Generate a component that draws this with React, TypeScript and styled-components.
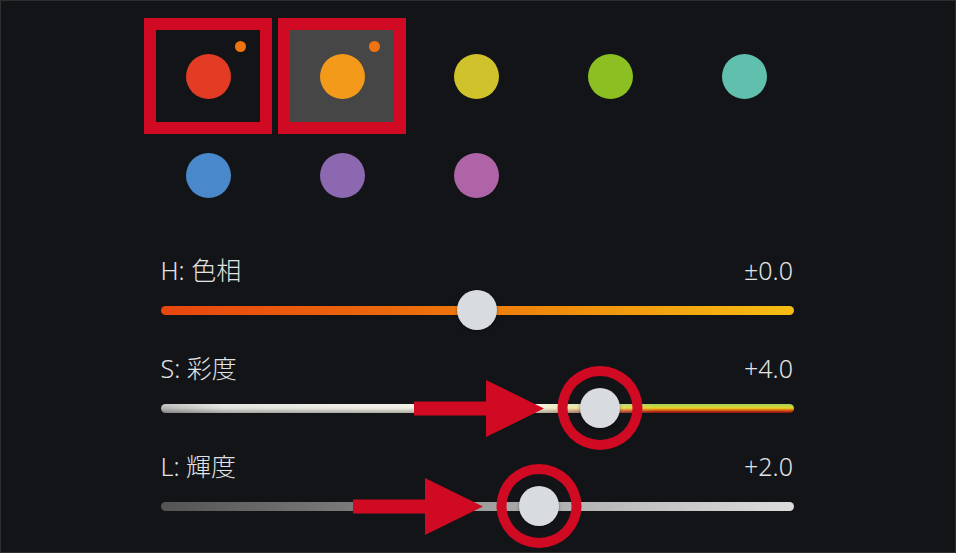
import React from 'react';
import styled, { createGlobalStyle } from 'styled-components';

const GlobalStyle = createGlobalStyle`
    html, body {
        margin: 0;
        padding: 0;
        background: #131417;
    }
    * {
        box-sizing: border-box;
    }
`;

const RED = '#cf0a22';

const Frame = styled.div`
    width: 956px;
    height: 553px;
    background-color: #131417;
    border: 1px solid #2e2f31;
    display: flex;
    flex-direction: column;
    align-items: center;
    padding-top: 29px;
    overflow: hidden;
    font-family: "Noto Sans", "Noto Sans CJK JP", sans-serif;
`;

const Panel = styled.div`
    width: 640px;
    margin-left: -4px;
`;

const SwatchGrid = styled.div`
    display: grid;
    grid-template-columns: repeat(5, 104px);
    grid-auto-rows: 92px;
    column-gap: 30px;
    row-gap: 7px;
`;

const Swatch = styled.div<{ $active?: boolean; $marked?: boolean }>`
    position: relative;
    display: flex;
    align-items: center;
    justify-content: center;
    background-color: ${(p) => (p.$active ? '#464646' : 'transparent')};
    outline: ${(p) => (p.$marked ? `12px solid ${RED}` : 'none')};
`;

const Dot = styled.div<{ $color: string }>`
    width: 45px;
    height: 45px;
    border-radius: 50%;
    background-color: ${(p) => p.$color};
`;

const Badge = styled.div`
    position: absolute;
    top: 11px;
    right: 14px;
    width: 11px;
    height: 11px;
    border-radius: 50%;
    background-color: #ef7410;
`;

const Sliders = styled.div`
    margin-top: 34px;
    display: flex;
    flex-direction: column;
    gap: 23px;
    padding: 0 2px 0 4.5px;
`;

const SliderBlock = styled.div`
    display: flex;
    flex-direction: column;
`;

const LabelRow = styled.div`
    display: flex;
    justify-content: space-between;
    align-items: center;
    height: 30px;
    font-size: 25px;
    font-weight: 300;
    line-height: 30px;
    color: #e2e3e5;
    padding: 0 1px 0 0;
`;

const TrackArea = styled.div`
    position: relative;
    height: 40px;
    margin-top: 5px;
    display: flex;
    align-items: center;
`;

const Track = styled.div<{ $bg: string }>`
    flex: 1;
    height: 9px;
    border-radius: 5px;
    background: ${(p) => p.$bg};
`;

const ThumbSpot = styled.div`
    position: absolute;
    top: 50%;
    width: 40px;
    height: 40px;
    transform: translate(-50%, -50%);
`;

const Thumb = styled.div`
    width: 40px;
    height: 40px;
    border-radius: 50%;
    background-color: #d8dbdf;
    box-shadow: 0 1px 3px rgba(0, 0, 0, 0.45);
`;

const Ring = styled.div`
    position: absolute;
    left: 50%;
    top: 50%;
    width: 85px;
    height: 84px;
    transform: translate(-50%, -50%);
    border: 10px solid ${RED};
    border-radius: 50%;
`;

const Arrow = styled.svg`
    position: absolute;
    left: -166px;
    top: -8px;
`;

const SHADE = 'linear-gradient(to bottom, rgba(255,255,255,0.25) 0%, rgba(255,255,255,0) 45%, rgba(0,0,0,0.28) 100%)';
const HUE = 'linear-gradient(to right, #e8460f 0%, #ec6c0c 40%, #f08f0c 65%, #f6be14 100%)';
const SAT =
    SHADE + ', ' +
    'linear-gradient(to right, #b4b4b4 0%, #e0e0dc 10%, #eeeee4 35%, #f2eed6 60%, rgba(242,238,214,0) 78%), ' +
    'linear-gradient(to bottom, #8cc42a 0%, #b9d02a 25%, #f2d21e 45%, #ee8a14 65%, #e2401a 82%, #b81410 100%)';
const LUM = 'linear-gradient(to right, #545454 0%, #7a7a7a 30%, #aeaeae 60%, #dcdcdc 100%)';

interface SliderProps {
    label: string;
    value: string;
    pct: number;
    bg: string;
    marked?: boolean;
}

const Slider: React.FC<SliderProps> = ({ label, value, pct, bg, marked }) => (
    <SliderBlock>
        <LabelRow>
            <span>{label}</span>
            <span>{value}</span>
        </LabelRow>
        <TrackArea>
            <Track $bg={bg} />
            <ThumbSpot style={{ left: `${pct}%` }}>
                <Thumb />
                {marked && (
                    <>
                        <Ring />
                        <Arrow width="130" height="57" viewBox="0 0 130 57">
                            <polygon points="0,21.5 72,21.5 72,0 130,28.5 72,57 72,35.5 0,35.5" fill={RED} />
                        </Arrow>
                    </>
                )}
            </ThumbSpot>
        </TrackArea>
    </SliderBlock>
);

const swatches = [
    { color: '#e33b24', marked: true, badge: true },
    { color: '#f39a1b', marked: true, active: true, badge: true },
    { color: '#cfc22a' },
    { color: '#8bbf22' },
    { color: '#60c0ad' },
    { color: '#4a88cc' },
    { color: '#8c68b0' },
    { color: '#b064a8' },
];

const App: React.FC = () => {
    return (
        <>
            <GlobalStyle />
            <Frame>
                <Panel>
                    <SwatchGrid>
                        {swatches.map((s, i) => (
                            <Swatch key={i} $active={s.active} $marked={s.marked}>
                                <Dot $color={s.color} />
                                {s.badge && <Badge />}
                            </Swatch>
                        ))}
                    </SwatchGrid>
                    <Sliders>
                        <Slider label="H: 色相" value="±0.0" pct={50} bg={HUE} />
                        <Slider label="S: 彩度" value="+4.0" pct={69.4} bg={SAT} marked />
                        <Slider label="L: 輝度" value="+2.0" pct={59.7} bg={LUM} marked />
                    </Sliders>
                </Panel>
            </Frame>
        </>
    );
};

export default App;
